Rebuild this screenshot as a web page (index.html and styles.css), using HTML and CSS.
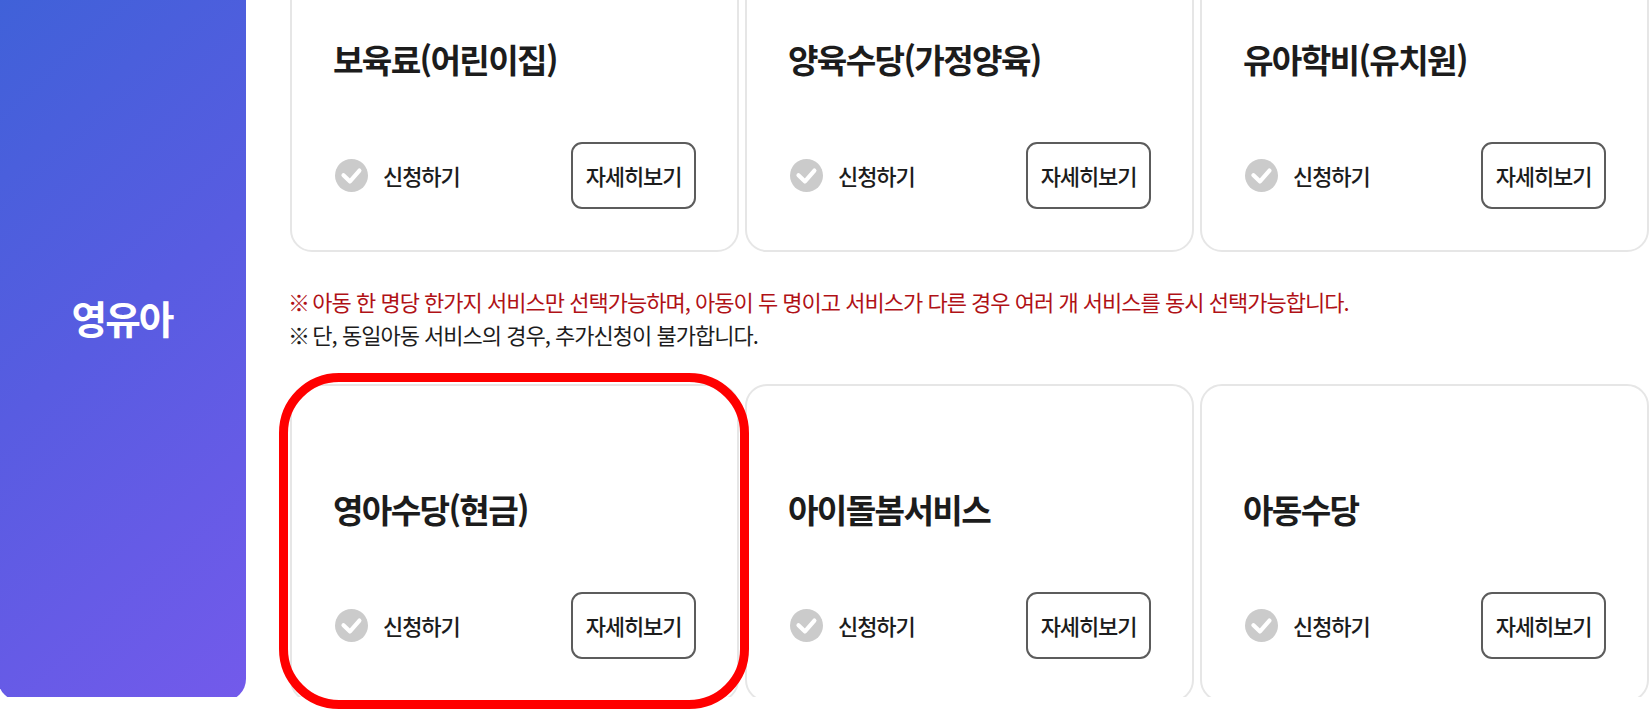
FILE: index.html
```
<!DOCTYPE html>
<html lang="ko">
<head>
    <meta charset="UTF-8">
    <meta name="viewport" content="width=device-width, initial-scale=1.0">
    <title>영유아 서비스 신청</title>
    <link rel="stylesheet" href="styles.css">
</head>
<body>
    <svg class="symbols" width="0" height="0">
        <symbol id="check" viewBox="0 0 33 33">
            <circle cx="16.5" cy="16.5" r="16.5" fill="#cbcbcb"/>
            <path d="M8.5 16.2l6.5 6.2L24.4 11.6" fill="none" stroke="#fff" stroke-width="4.2" stroke-linecap="round" stroke-linejoin="round"/>
        </symbol>
    </svg>

    <div class="viewport">
        <div class="service">
            <div class="category">
                <h2>영유아</h2>
            </div>

            <div class="content">
                <div class="cards">
                    <div class="card">
                        <h3>보육료(어린이집)</h3>
                        <div class="card-bottom">
                            <label class="apply"><svg class="check"><use href="#check"/></svg><span>신청하기</span></label>
                            <button class="detail">자세히보기</button>
                        </div>
                    </div>
                    <div class="card">
                        <h3>양육수당(가정양육)</h3>
                        <div class="card-bottom">
                            <label class="apply"><svg class="check"><use href="#check"/></svg><span>신청하기</span></label>
                            <button class="detail">자세히보기</button>
                        </div>
                    </div>
                    <div class="card">
                        <h3>유아학비(유치원)</h3>
                        <div class="card-bottom">
                            <label class="apply"><svg class="check"><use href="#check"/></svg><span>신청하기</span></label>
                            <button class="detail">자세히보기</button>
                        </div>
                    </div>
                </div>

                <div class="notice">
                    <p class="red"><span class="mark">※</span> 아동 한 명당 한가지 서비스만 선택가능하며, 아동이 두 명이고 서비스가 다른 경우 여러 개 서비스를 동시 선택가능합니다.</p>
                    <p><span class="mark">※</span> 단, 동일아동 서비스의 경우, 추가신청이 불가합니다.</p>
                </div>

                <div class="cards">
                    <div class="card">
                        <h3>영아수당(현금)</h3>
                        <div class="card-bottom">
                            <label class="apply"><svg class="check"><use href="#check"/></svg><span>신청하기</span></label>
                            <button class="detail">자세히보기</button>
                        </div>
                    </div>
                    <div class="card">
                        <h3>아이돌봄서비스</h3>
                        <div class="card-bottom">
                            <label class="apply"><svg class="check"><use href="#check"/></svg><span>신청하기</span></label>
                            <button class="detail">자세히보기</button>
                        </div>
                    </div>
                    <div class="card">
                        <h3>아동수당</h3>
                        <div class="card-bottom">
                            <label class="apply"><svg class="check"><use href="#check"/></svg><span>신청하기</span></label>
                            <button class="detail">자세히보기</button>
                        </div>
                    </div>
                </div>
            </div>
        </div>
    </div>

    <div class="highlight"></div>
</body>
</html>
```
FILE: styles.css
```
* {
    box-sizing: border-box;
    margin: 0;
    padding: 0;
    letter-spacing: -0.05em;
}

body {
    position: relative;
    height: 709px;
    overflow: hidden;
    background: #fff;
    color: #1c1c1c;
    font-family: "Noto Sans CJK KR", "Noto Sans", sans-serif;
}

.symbols {
    display: block;
}

.viewport {
    height: 697px;
    overflow: hidden;
}

/* the block starts above the visible area */
.service {
    display: flex;
    width: 1651px;
    height: 767px;
    margin: -66px 0 0 -2px;
}

.category {
    display: flex;
    align-items: center;
    justify-content: center;
    width: 248px;
    padding-bottom: 1px;
    border-radius: 22px;
    background: linear-gradient(138deg, #3c62d7 0%, #585ce1 50%, #735aeb 100%);
}

.category h2 {
    color: #fff;
    font-size: 38.7px;
    font-weight: 700;
}

.content {
    width: 1359px;
    margin-left: 44px;
}

.cards {
    display: grid;
    grid-template-columns: repeat(3, 449px);
    gap: 6px;
}

.card {
    height: 318px;
    padding: 99px 41px 0 43px;
    border: 2px solid #e6e6e6;
    border-radius: 22px;
    background: #fff;
}

.card h3 {
    height: 48px;
    margin-left: -2px;
    line-height: 48px;
    font-size: 33.2px;
    font-weight: 700;
}

.card-bottom {
    display: flex;
    align-items: center;
    justify-content: space-between;
    height: 67px;
    margin-top: 59px;
}

.apply {
    display: flex;
    align-items: center;
    font-size: 22px;
    font-weight: 500;
}

.apply span {
    padding-bottom: 2px;
}

.check {
    width: 33px;
    height: 33px;
    margin-right: 15px;
}

.detail {
    width: 125px;
    height: 67px;
    padding-bottom: 2px;
    border: 2px solid #5c5c5c;
    border-radius: 11px;
    background: #fff;
    color: #1c1c1c;
    font-family: inherit;
    font-size: 22px;
    font-weight: 500;
}

.notice {
    height: 132px;
    padding-top: 33px;
    margin-left: -2px;
    font-size: 22px;
    line-height: 33px;
    white-space: nowrap;
}

.notice p {
    letter-spacing: -0.045em;
}

.notice .red {
    color: #b01116;
}

.notice .mark {
    letter-spacing: -0.13em;
}

/* marker drawn over the first card of the second row */
.highlight {
    position: absolute;
    top: 373px;
    left: 279px;
    width: 470px;
    height: 336px;
    border: 9px solid #f00;
    border-radius: 60px;
}
```
